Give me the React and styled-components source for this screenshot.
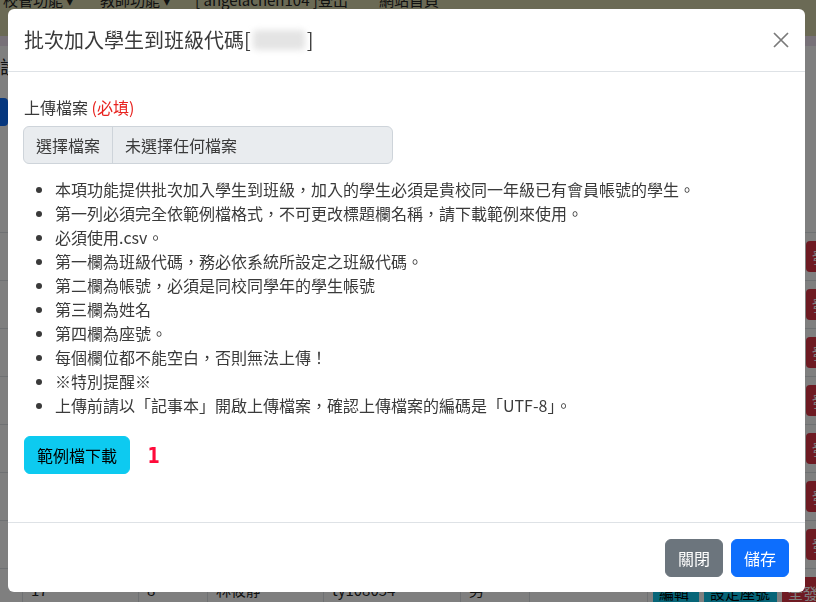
import React from "react";
import styled, { createGlobalStyle } from "styled-components";

const Global = createGlobalStyle`
  html, body { margin: 0; padding: 0; background: #fff; overflow: hidden; }
  body { font-family: "Noto Sans CJK TC", "Noto Sans", sans-serif; color: #212529; }
  * { box-sizing: border-box; }
`;

/* ---------- background page ---------- */
const Page = styled.div`
  width: 816px;
  height: 602px;
  overflow: hidden;
  display: flex;
  flex-direction: column;
`;

const Navbar = styled.nav`
  flex: none;
  height: 50px;
  margin-top: -14px;
  background: #d6d4aa;
  display: flex;
  align-items: flex-start;
  padding: 2px 0 0 3px;
  font-size: 15px;
  line-height: 24px;
  color: #222;
`;

const NavItem = styled.span`
  width: ${(p) => p.$w}px;
  flex: none;
  white-space: nowrap;
`;

const SubBand = styled.div`
  flex: none;
  height: 10px;
  background: #efe2f1;
`;

const Toolbar = styled.div`
  flex: none;
  display: flex;
  flex-direction: column;
  gap: 20px;
  padding: 8px 0 0 0;
  height: 186px;
`;

const Heading = styled.div`
  font-size: 18px;
  line-height: 24px;
  color: #222;
`;

const PrimaryBtn = styled.div`
  width: 70px;
  height: 28px;
  margin-left: -62px;
  border-radius: 4px;
  background: #0d6efd;
`;

const Row = styled.div`
  flex: none;
  height: 48px;
  display: grid;
  grid-template-columns: 22px 116px 69px 116px 137px 69px 118px 1fr;
  border-top: 1px solid #dee2e6;
  font-size: 15px;
  color: #222;
`;

const Cell = styled.div`
  border-left: 1px solid #dee2e6;
  padding: 10px 8px;
  white-space: nowrap;
  overflow: hidden;
  &:first-child { border-left: none; }
`;

const ActionCell = styled.div`
  border-left: 1px solid #dee2e6;
  padding: 8px 0 0 5px;
  display: flex;
  gap: 5px;
  white-space: nowrap;
`;

const SmallBtn = styled.div`
  height: 31px;
  width: ${(p) => p.$w}px;
  flex: none;
  border-radius: 4px;
  background: ${(p) => (p.$danger ? "#dc3545" : "#0dcaf0")};
  color: ${(p) => (p.$danger ? "#fff" : "#000")};
  font-size: 15px;
  line-height: 31px;
  padding-left: 6px;
  overflow: hidden;
`;

const Backdrop = styled.div`
  position: fixed;
  inset: 0;
  background: rgba(0, 0, 0, 0.5);
`;

/* ---------- modal ---------- */
const Modal = styled.div`
  position: fixed;
  top: 9px;
  left: 8px;
  width: 797px;
  height: 583px;
  background: #fff;
  border-radius: 6px;
  display: flex;
  flex-direction: column;
  overflow: hidden;
`;

const Header = styled.div`
  flex: none;
  display: flex;
  align-items: center;
  justify-content: space-between;
  padding: 16px;
  border-bottom: 1px solid #dee2e6;
`;

const Title = styled.h5`
  margin: 0;
  font-size: 20px;
  font-weight: 400;
  line-height: 30px;
  color: #3a3a3a;
  display: flex;
  align-items: center;
`;

const Redacted = styled.span`
  display: inline-block;
  width: 52px;
  height: 20px;
  margin: 0 2px;
  border-radius: 4px;
  background: #e4e4e4;
  filter: blur(3px);
`;

const CloseBtn = styled.button`
  border: none;
  background: none;
  padding: 0;
  width: 16px;
  height: 16px;
  display: flex;
  cursor: pointer;
`;

const Body = styled.div`
  flex: 1;
  padding: 23px 16px 16px;
  font-size: 16px;
  line-height: 24px;
  color: #3a3a3a;
`;

const Label = styled.div`
  margin-bottom: 7px;
`;

const Required = styled.span`
  color: #e8231f;
`;

const FileInput = styled.div`
  width: 370px;
  height: 38px;
  margin-left: -1px;
  display: flex;
  align-items: stretch;
  background: #e9ecef;
  border: 1px solid #ced4da;
  border-radius: 6px;
`;

const FileBtn = styled.span`
  padding: 6px 12px;
  border-right: 1px solid #ced4da;
`;

const FileName = styled.span`
  padding: 6px 12px;
`;

const List = styled.ul`
  margin: 13px 0 19px;
  padding-left: 31px;
  li { line-height: 24px; padding-left: 0; }
`;

const ActionRow = styled.div`
  display: flex;
  align-items: center;
`;

const Button = styled.button`
  height: 38px;
  padding: 6px 12px;
  border: 1px solid ${(p) => p.$bg};
  border-radius: 6px;
  background: ${(p) => p.$bg};
  color: ${(p) => p.$fg};
  font-family: "Noto Sans CJK TC", sans-serif;
  font-size: 16px;
  line-height: 24px;
`;

const Annotation = styled.span`
  margin-left: 16px;
  margin-top: 2px;
  color: #ff0a3a;
  font-family: "DejaVu Sans", sans-serif;
  font-weight: 900;
  font-size: 22px;
  line-height: 24px;
  transform: scaleX(0.8);
`;

const Footer = styled.div`
  flex: none;
  display: flex;
  justify-content: flex-end;
  align-items: center;
  gap: 8px;
  padding: 16px 16px 15px;
  border-top: 1px solid #dee2e6;
`;

const items = [
  "本項功能提供批次加入學生到班級，加入的學生必須是貴校同一年級已有會員帳號的學生。",
  "第一列必須完全依範例檔格式，不可更改標題欄名稱，請下載範例來使用。",
  "必須使用.csv。",
  "第一欄為班級代碼，務必依系統所設定之班級代碼。",
  "第二欄為帳號，必須是同校同學年的學生帳號",
  "第三欄為姓名",
  "第四欄為座號。",
  "每個欄位都不能空白，否則無法上傳！",
  "※特別提醒※",
  "上傳前請以「記事本」開啟上傳檔案，確認上傳檔案的編碼是「UTF-8」。",
];

const rows = [
  null, null, null, null, null, null, null,
  ["17", "8", "林筱靜", "ty108054", "男"],
];

export default function App() {
  return (
    <>
      <Global />
      <Page>
        <Navbar>
          <NavItem $w={97}>校管功能 ▾</NavItem>
          <NavItem $w={95}>教師功能 ▾</NavItem>
          <NavItem $w={184}>[ angelachen104 ]登出</NavItem>
          <NavItem $w={80}>網站首頁</NavItem>
        </Navbar>
        <SubBand />
        <Toolbar>
          <Heading>設定</Heading>
          <PrimaryBtn />
        </Toolbar>
        {rows.map((r, i) => {
          const last = i === rows.length - 1;
          return (
            <Row key={i}>
              <Cell />
              <Cell>{r && r[0]}</Cell>
              <Cell>{r && r[1]}</Cell>
              <Cell>{r && r[2]}</Cell>
              <Cell>{r && r[3]}</Cell>
              <Cell>{r && r[4]}</Cell>
              <Cell />
              <ActionCell>
                <SmallBtn $w={46}>{last ? "編輯" : ""}</SmallBtn>
                <SmallBtn $w={last ? 73 : 97}>{last ? "設定座號" : ""}</SmallBtn>
                <SmallBtn $danger $w={60}>{last ? "全發" : "發送"}</SmallBtn>
              </ActionCell>
            </Row>
          );
        })}
      </Page>
      <Backdrop />
      <Modal>
        <Header>
          <Title>
            批次加入學生到班級代碼[<Redacted aria-hidden="true" />]
          </Title>
          <CloseBtn aria-label="close">
            <svg width="16" height="16" viewBox="0 0 16 16">
              <path d="M1 1 L15 15 M15 1 L1 15" stroke="#7a7a7a" strokeWidth="1.7" fill="none" />
            </svg>
          </CloseBtn>
        </Header>
        <Body>
          <Label>
            上傳檔案 <Required>(必填)</Required>
          </Label>
          <FileInput>
            <FileBtn>選擇檔案</FileBtn>
            <FileName>未選擇任何檔案</FileName>
          </FileInput>
          <List>
            {items.map((t) => (
              <li key={t}>{t}</li>
            ))}
          </List>
          <ActionRow>
            <Button $bg="#0dcaf0" $fg="#000">範例檔下載</Button>
            <Annotation>1</Annotation>
          </ActionRow>
        </Body>
        <Footer>
          <Button $bg="#6c757d" $fg="#fff">關閉</Button>
          <Button $bg="#0d6efd" $fg="#fff">儲存</Button>
        </Footer>
      </Modal>
    </>
  );
}
